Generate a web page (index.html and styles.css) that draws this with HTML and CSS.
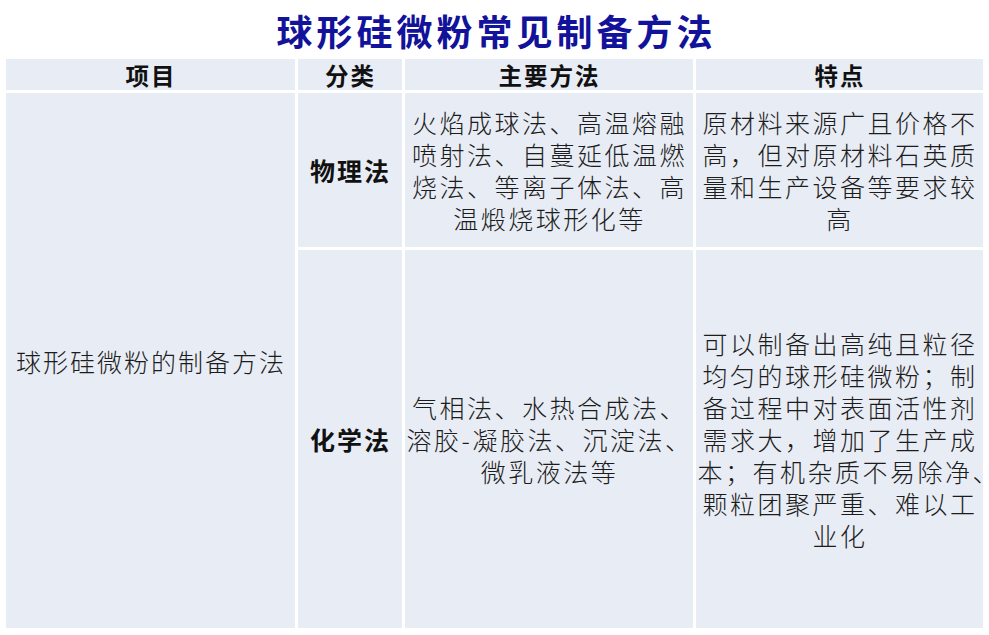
FILE: index.html
```html
<!DOCTYPE html>
<html lang="zh-CN">
<head>
<meta charset="utf-8">
<title>球形硅微粉常见制备方法</title>
<link rel="stylesheet" href="styles.css">
</head>
<body>
<div class="page">
  <h1 class="title">球形硅微粉常见制备方法</h1>
  <div class="table">
    <div class="cell head">项目</div>
    <div class="cell head">分类</div>
    <div class="cell head">主要方法</div>
    <div class="cell head">特点</div>

    <div class="cell item">球形硅微粉的制备方法</div>
    <div class="cell cat">物理法</div>
    <div class="cell text"><div class="lines">火焰成球法、高温熔融<br>喷射法、自蔓延低温燃<br>烧法、等离子体法、高<br>温煅烧球形化等</div></div>
    <div class="cell text"><div class="lines">原材料来源广且价格不<br>高，但对原材料石英质<br>量和生产设备等要求较<br>高</div></div>

    <div class="cell cat">化学法</div>
    <div class="cell text"><div class="lines">气相法、水热合成法、<br>溶胶-凝胶法、沉淀法、<br>微乳液法等</div></div>
    <div class="cell text"><div class="lines">可以制备出高纯且粒径<br>均匀的球形硅微粉；制<br>备过程中对表面活性剂<br>需求大，增加了生产成<br>本；有机杂质不易除净<span class="hang">、</span><br>颗粒团聚严重、难以工<br>业化</div></div>
  </div>
</div>
</body>
</html>
```

FILE: styles.css
```css
html, body {
  margin: 0;
  padding: 0;
  background: #ffffff;
  overflow: hidden;
}

.page {
  width: 989px;
  height: 635px;
  display: flex;
  flex-direction: column;
  align-items: center;
  font-family: "Noto Sans CJK SC", "Noto Sans", sans-serif;
}

.title {
  margin: 0;
  height: 59px;
  display: flex;
  align-items: center;
  justify-content: center;
  font-size: 36px;
  font-weight: 700;
  letter-spacing: 4px;
  padding-left: 4px;
  color: #12129a;
  line-height: 1;
}

.table {
  display: grid;
  grid-template-columns: 289px 104px 288px 287px;
  grid-template-rows: 31px 154px 378px;
  column-gap: 3px;
  row-gap: 3px;
  width: 978px;
}

.cell {
  background: #e8ecf4;
  display: flex;
  align-items: center;
  justify-content: center;
  text-align: center;
  color: #1c1c1c;
  white-space: nowrap;
}

.head {
  font-size: 23.5px;
  font-weight: 700;
  letter-spacing: 2px;
  padding-left: 2px;
  color: #111;
}

.item {
  grid-row: 2 / 4;
  font-size: 25px;
  font-weight: 300;
  letter-spacing: 2px;
  padding-left: 2px;
}

.cat {
  font-size: 25px;
  font-weight: 700;
  letter-spacing: 2px;
  padding-left: 2px;
  color: #111;
}

.text {
  font-size: 25px;
  font-weight: 300;
  line-height: 32px;
  letter-spacing: 2.5px;
}

.lines {
  width: 100%;
  box-sizing: border-box;
  padding-left: 2px;
  text-align: center;
}

.hang {
  display: inline-block;
  width: 10px;
  letter-spacing: 0;
  overflow: visible;
  text-align: left;
}
```
